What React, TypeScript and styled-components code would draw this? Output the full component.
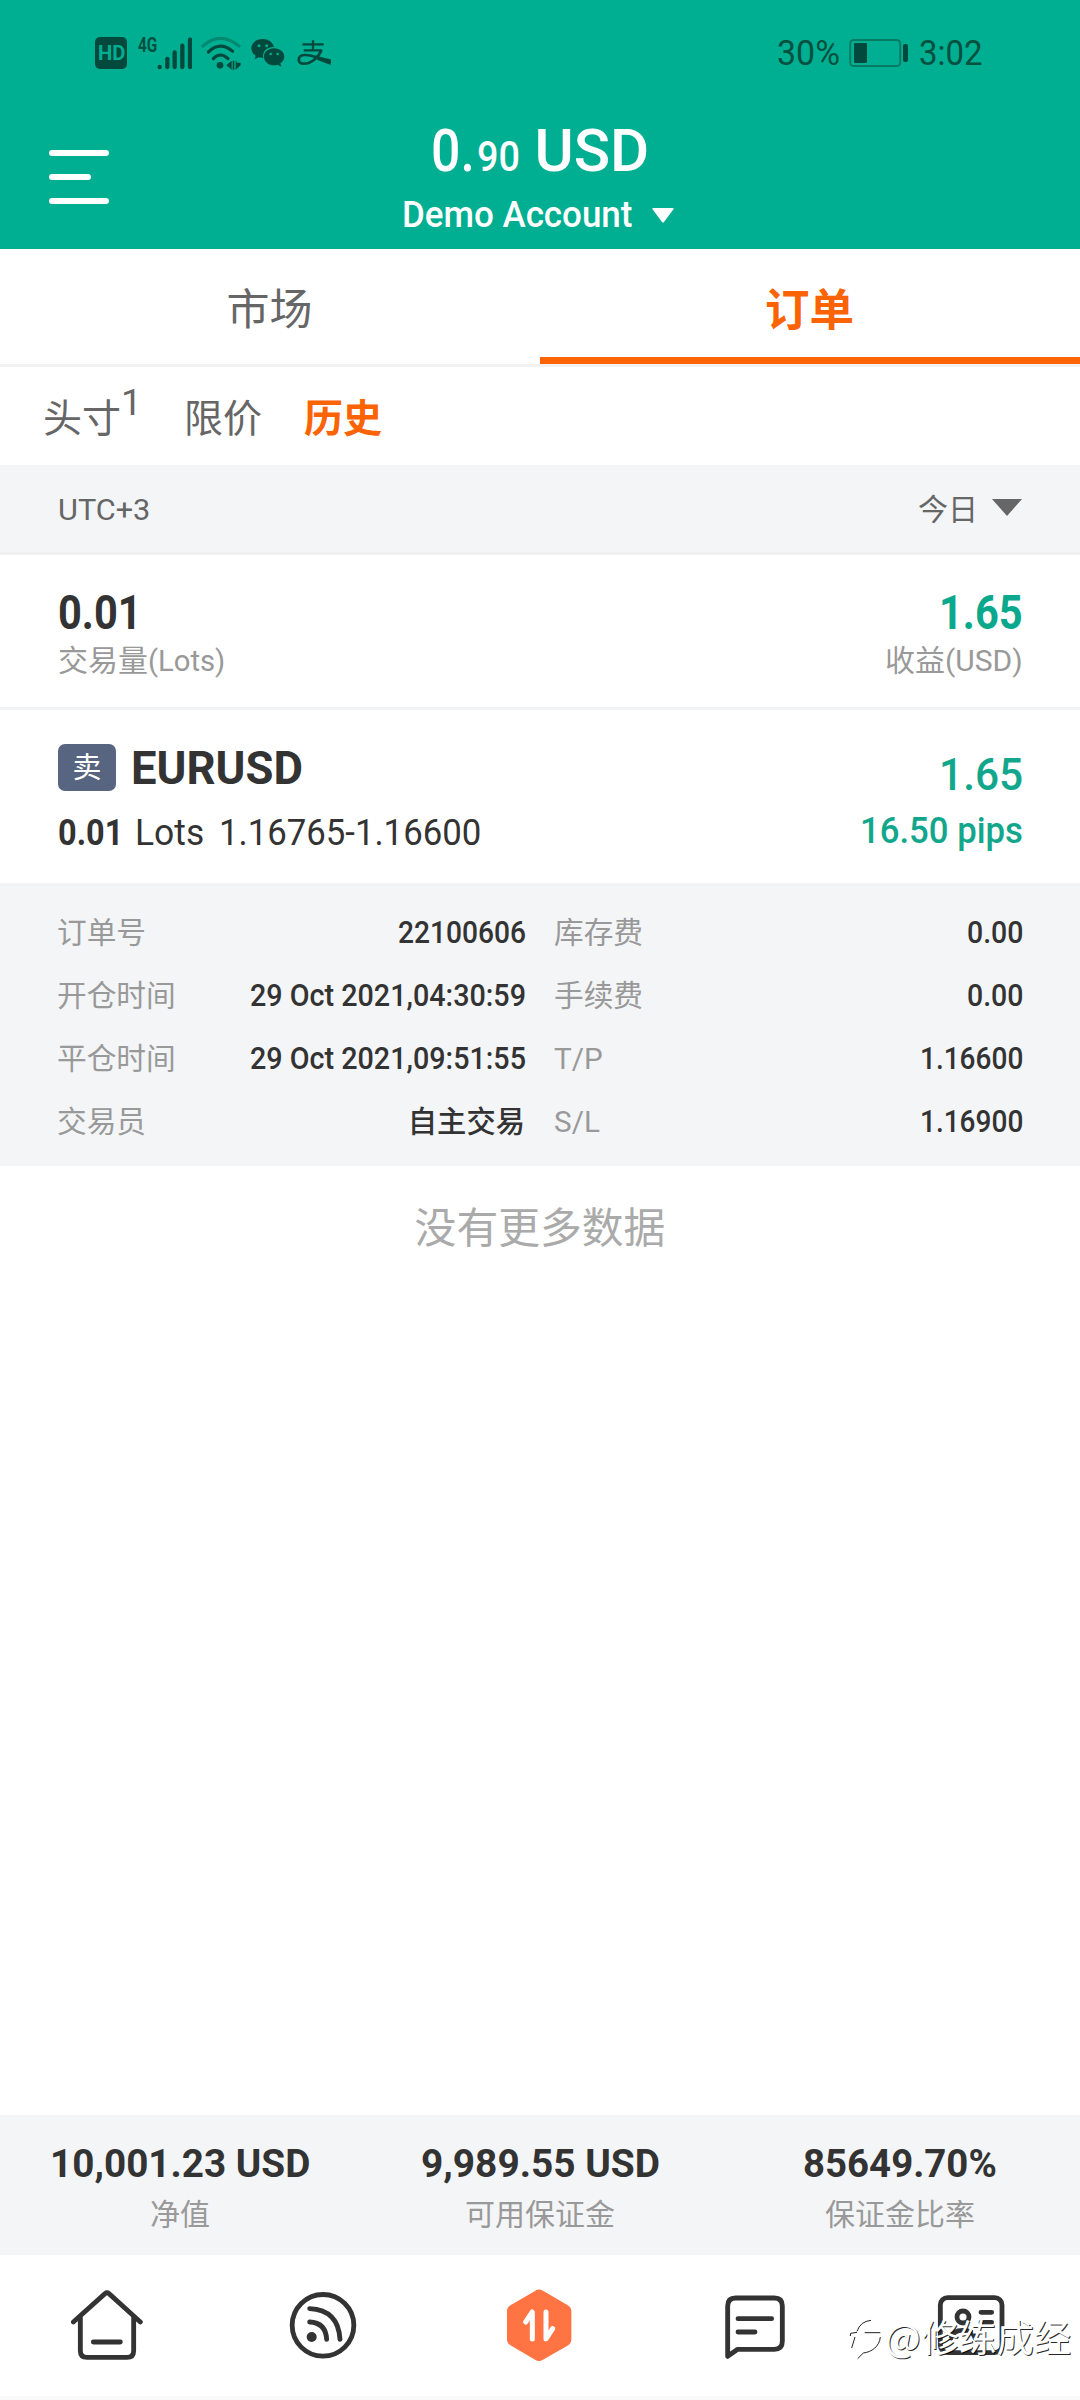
import React, { useLayoutEffect, useRef, useState } from 'react';
import styled, { createGlobalStyle } from 'styled-components';

const Global = createGlobalStyle`
  * { box-sizing: border-box; }
  body { margin: 0; background: #fff; }
`;

const teal = '#00ae92';
const orange = '#fb6304';
const ink = '#333333';

const Screen = styled.div`
  position: relative;
  width: 1080px;
  height: 2400px;
  display: flex;
  flex-direction: column;
  overflow: hidden;
  background: #fff;
  color: ${ink};
  font-family: Roboto, 'Noto Sans CJK SC', sans-serif;
`;

const FitBox = styled.span<{ $w: number }>`
  display: inline-block;
  flex: none;
  width: ${p => p.$w}px;
  white-space: nowrap;
`;
const FitInner = styled.span`
  display: inline-block;
  transform-origin: 0 50%;
`;

/** Condenses a run of text horizontally so that it fills the given width. */
function Fit({ w, children }: { w: number; children: React.ReactNode }) {
  const ref = useRef<HTMLSpanElement>(null);
  const [scale, setScale] = useState(1);
  useLayoutEffect(() => {
    if (ref.current) setScale(w / ref.current.offsetWidth);
  }, [w]);
  return (
    <FitBox $w={w}>
      <FitInner ref={ref} style={{ transform: `scaleX(${scale})` }}>{children}</FitInner>
    </FitBox>
  );
}

/* ---------- header ---------- */
const Header = styled.header`
  flex: none;
  height: 249px;
  background: ${teal};
  color: #fff;
`;
const StatusBar = styled.div`
  height: 106px;
  padding: 0 97px 0 95px;
  display: flex;
  align-items: center;
  justify-content: space-between;
  color: #06503f;
`;
const StatusSide = styled.div`
  display: flex;
  align-items: center;
`;
const HdBadge = styled.span`
  width: 32px;
  height: 32px;
  border-radius: 5px;
  background: #00493c;
  color: ${teal};
  font-size: 21px;
  font-weight: 700;
  line-height: 33px;
  padding-left: 3px;
`;
const NetType = styled.span`
  margin: -17px 0 0 11px;
  font-size: 21px;
  font-weight: 700;
  line-height: 24px;
`;
const StatusText = styled.span`
  padding-top: 2px;
  font-size: 35px;
  line-height: 40px;
  font-weight: 400;
`;
const Clock = styled(StatusText)`
  margin-left: 10px;
`;
const Glyph = styled.svg<{ $ml?: number }>`
  display: block;
  flex: none;
  margin-left: ${p => p.$ml ?? 0}px;
`;
const TitleBar = styled.div`
  display: grid;
  grid-template-columns: 140px 1fr 140px;
  height: 143px;
`;
const MenuButton = styled.div`
  padding: 44px 0 0 49px;
  display: flex;
  flex-direction: column;
  gap: 18px;
`;
const MenuLine = styled.span<{ $w: number }>`
  width: ${p => p.$w}px;
  height: 6px;
  border-radius: 3px;
  background: #fff;
`;
const Account = styled.div`
  padding-top: 9px;
  display: flex;
  flex-direction: column;
  align-items: center;
`;
const Balance = styled.div`
  display: flex;
  align-items: baseline;
  font-size: 60px;
  font-weight: 500;
  line-height: 72px;
`;
const Cents = styled.span`
  margin: 0 15px 0 2px;
  font-size: 43px;
  line-height: 60px;
`;
const AccountName = styled.div`
  margin: 5px 0 0 -5px;
  display: flex;
  align-items: center;
  gap: 20px;
  font-size: 36px;
  font-weight: 500;
  line-height: 46px;
`;

/* ---------- tabs ---------- */
const Tabs = styled.nav`
  flex: none;
  display: flex;
  height: 118px;
  border-bottom: 3px solid #f2f2f3;
`;
const Tab = styled.div<{ $active?: boolean }>`
  flex: 1;
  padding: 6px 1px 0 0;
  display: flex;
  align-items: center;
  justify-content: center;
  border-bottom: 7px solid ${p => (p.$active ? orange : 'transparent')};
  color: ${p => (p.$active ? orange : '#666')};
  font-size: ${p => (p.$active ? 44.5 : 43)}px;
  font-weight: ${p => (p.$active ? 700 : 400)};
`;
const SubTabs = styled.div`
  flex: none;
  height: 98px;
  padding: 5px 0 0 43px;
  display: flex;
  align-items: center;
`;
const SubTab = styled.span<{ $active?: boolean }>`
  margin-right: 42px;
  display: flex;
  font-size: 39px;
  line-height: 46px;
  color: ${p => (p.$active ? orange : '#666')};
  font-weight: ${p => (p.$active ? 700 : 400)};
`;
const Count = styled.span`
  width: 21px;
  margin-top: -16px;
  font-size: 37px;
`;

/* ---------- history ---------- */
const FilterBar = styled.div`
  flex: none;
  height: 90px;
  padding: 2px 58px 0 58px;
  display: flex;
  align-items: center;
  justify-content: space-between;
  background: #f4f5f7;
  border-bottom: 3px solid #f1f1f2;
  font-size: 30px;
  line-height: 40px;
  color: #666;
`;
const Range = styled.span`
  display: flex;
  align-items: center;
  gap: 14px;
`;
const Caret = styled(Glyph)`
  margin-top: -4px;
`;
const Totals = styled.section`
  flex: none;
  height: 155px;
  padding: 30px 57px 0 58px;
  display: flex;
  justify-content: space-between;
  border-bottom: 3px solid #f2f3f4;
`;
const Stack = styled.div<{ $end?: boolean }>`
  display: flex;
  flex-direction: column;
  align-items: ${p => (p.$end ? 'flex-end' : 'flex-start')};
`;
const TotalValue = styled.div<{ $gain?: boolean }>`
  font-size: 48px;
  font-weight: 700;
  line-height: 56px;
  color: ${p => (p.$gain ? '#0aa88c' : ink)};
`;
const TotalLabel = styled.div`
  font-size: 30px;
  line-height: 40px;
  color: #999;
`;
const Trade = styled.section`
  flex: none;
  height: 173px;
  padding: 34px 57px 0 58px;
  display: flex;
  justify-content: space-between;
`;
const SymbolRow = styled.div`
  display: flex;
  align-items: center;
  gap: 15px;
  height: 47px;
  font-size: 47px;
  font-weight: 700;
  line-height: 47px;
`;
const Side = styled.span`
  width: 58px;
  height: 47px;
  border-radius: 7px;
  background: #576580;
  color: #fff;
  font-size: 29px;
  font-weight: 400;
  line-height: 48px;
  text-align: center;
`;
const PriceRow = styled.div`
  margin-top: 20px;
  display: flex;
  font-size: 37px;
  line-height: 44px;
`;
const Lots = styled.span`
  margin: 0 15px 0 12px;
`;
const Profit = styled.div`
  margin-top: 6px;
  font-size: 45px;
  font-weight: 500;
  line-height: 50px;
  color: #12a78c;
`;
const Pips = styled.div`
  margin-top: 9px;
  font-size: 36px;
  font-weight: 500;
  line-height: 44px;
  color: #12a78c;
`;
const Details = styled.section`
  flex: none;
  height: 283px;
  padding: 15px 57px 0;
  display: grid;
  grid-template-columns: 469px 469px;
  grid-auto-rows: 63px;
  column-gap: 28px;
  border-top: 3px solid #f2f3f4;
  background: #f4f5f7;
`;
const Field = styled.div`
  display: flex;
  align-items: center;
  justify-content: space-between;
  font-size: 31px;
  font-weight: 500;
  line-height: 40px;
`;
const FieldName = styled.span`
  font-size: 29.7px;
  font-weight: 400;
  color: #999;
`;
const Trader = styled.span`
  margin-right: 1px;
  font-size: 29.3px;
`;
const Empty = styled.div`
  flex: 1;
  padding-top: 33px;
  text-align: center;
  font-size: 41.8px;
  line-height: 60px;
  color: #aaa;
`;

/* ---------- footer ---------- */
const Funds = styled.section`
  flex: none;
  height: 140px;
  padding-top: 27px;
  display: grid;
  grid-template-columns: repeat(3, 360px);
  background: #f4f5f7;
  text-align: center;
`;
const FundValue = styled.div`
  font-size: 39px;
  font-weight: 700;
  line-height: 44px;
`;
const FundLabel = styled.div`
  margin-top: 9px;
  font-size: 30px;
  line-height: 40px;
  color: #999;
`;
const NavBar = styled.nav`
  flex: none;
  height: 145px;
  padding-bottom: 2px;
  display: grid;
  grid-template-columns: repeat(5, 216px);
  align-items: center;
  justify-items: center;
  border-bottom: 4px solid #fafafa;
`;
const NavIcon = styled.svg`
  width: 72px;
  height: 72px;
  margin-left: -2px;
  fill: none;
  stroke: #333;
  stroke-width: 14.5;
  stroke-linecap: round;
  stroke-linejoin: round;
`;
const Watermark = styled.div`
  position: absolute;
  right: 9px;
  bottom: 31px;
  display: flex;
  align-items: center;
  color: #fff;
  font-family: 'Noto Sans CJK SC', sans-serif;
  font-size: 37.3px;
  line-height: 54px;
  padding-bottom: 6px;
  text-shadow: 1px 1px 0 rgba(0, 0, 0, 0.85);
`;
const At = styled.span`
  margin: 0 1px 0 1px;
  font-size: 38px;
`;
const WatermarkLogo = styled(Glyph)`
  margin-top: 5px;
`;

const fields: [string, React.ReactNode, string, React.ReactNode][] = [
  ['订单号', <Fit w={128}>22100606</Fit>, '库存费', <Fit w={56}>0.00</Fit>],
  ['开仓时间', <Fit w={276}>29 Oct 2021,04:30:59</Fit>, '手续费', <Fit w={56}>0.00</Fit>],
  ['平仓时间', <Fit w={276}>29 Oct 2021,09:51:55</Fit>, 'T/P', <Fit w={103}>1.16600</Fit>],
  ['交易员', <Trader>自主交易</Trader>, 'S/L', <Fit w={103}>1.16900</Fit>],
];

export default function App() {
  return (
    <Screen>
      <Global />
      <Header>
        <StatusBar>
          <StatusSide>
            <HdBadge><Fit w={27}>HD</Fit></HdBadge>
            <NetType><Fit w={19}>4G</Fit></NetType>
            <Glyph width="35" height="34" viewBox="0 0 105 102" $ml={0} stroke="#00493c" strokeWidth="13" strokeLinecap="round">
              <path d="M8 93V93.1M31 69V93M53 49V93M76 29V93M99 11V93" />
            </Glyph>
            <Glyph width="40" height="34" viewBox="0 0 120 102" $ml={9} fill="none" stroke="#00493c" strokeWidth="9.500" strokeLinecap="round">
              <path d="M6 30Q57-16 114 30" stroke="#008a72" />
              <path d="M22 48Q58 14 95 46M37 68Q58 46 81 68" />
              <circle cx="57" cy="88" r="10" fill="#00493c" stroke="none" />
              <path d="M92 74V101L76 88ZM95 74H100V101H95ZM104 74V101L119 88V80L107 80V74Z" fill="#00493c" stroke="none" />
            </Glyph>
            <Glyph width="34" height="30" viewBox="0 0 102 90" $ml={10} fill="#00493c">
              <path d="M35 3C16 3 1 15 1 31c0 9 5 17 13 22l-3 11 12-6c4 1 8 2 14 2C33 41 47 26 69 27 66 13 52 3 35 3Z" />
              <path d="M69 31c-17 0-30 11-30 25s13 26 30 26c4 0 8-1 11-2l11 6-3-10c7-5 12-12 12-20C100 42 86 31 69 31Z" />
              <g fill={teal}><circle cx="24" cy="23" r="4.5" /><circle cx="47" cy="23" r="4.5" /><circle cx="59" cy="48" r="3.8" /><circle cx="80" cy="48" r="3.8" /></g>
            </Glyph>
            <Glyph width="34" height="28" viewBox="0 0 102 84" $ml={12} fill="none" stroke="#00493c" strokeWidth="8">
              <path d="M16 16H80M48 4V32M20 34H76" strokeWidth="7" />
              <path d="M73 33C66 54 43 74 20 74C0 74 0 50 22 48C45 46 67 60 101 68" />
              <path d="M66 53L101 61V78L60 62Z" fill="#00493c" stroke="none" />
            </Glyph>
          </StatusSide>
          <StatusSide>
            <StatusText><Fit w={63}>30%</Fit></StatusText>
            <Glyph width="60" height="28" viewBox="0 0 60 28" $ml={9}>
              <rect x="1.2" y="1" width="50" height="26" rx="3.5" fill="none" stroke="#067a63" strokeWidth="1.9" />
              <rect x="5" y="4" width="13" height="20" rx="1" fill="#00493c" />
              <rect x="54" y="5" width="5" height="18" rx="2" fill="#00493c" />
            </Glyph>
            <Clock><Fit w={64}>3:02</Fit></Clock>
          </StatusSide>
        </StatusBar>
        <TitleBar>
          <MenuButton>
            <MenuLine $w={60} />
            <MenuLine $w={42} />
            <MenuLine $w={60} />
          </MenuButton>
          <Account>
            <Balance>
              <Fit w={44}>0.</Fit>
              <Cents><Fit w={43}>90</Fit></Cents>
              <Fit w={115}>USD</Fit>
            </Balance>
            <AccountName>
              <Fit w={230}>Demo Account</Fit>
              <Glyph width="22" height="15" viewBox="0 0 22 15" fill="#fff">
                <path d="M1.5 0H20.500Q22.500 0 21.300 1.600L12 14Q11 15.200 10 14L.7 1.600Q-.5 0 1.500 0Z" />
              </Glyph>
            </AccountName>
          </Account>
        </TitleBar>
      </Header>

      <Tabs>
        <Tab>市场</Tab>
        <Tab $active>订单</Tab>
      </Tabs>
      <SubTabs>
        <SubTab>头寸<Count>1</Count></SubTab>
        <SubTab>限价</SubTab>
        <SubTab $active>历史</SubTab>
      </SubTabs>

      <FilterBar>
        <Fit w={92}>UTC+3</Fit>
        <Range>
          今日
          <Caret width="30" height="17" viewBox="0 0 30 17" fill="#666"><path d="M0 0H30L15 17Z" /></Caret>
        </Range>
      </FilterBar>

      <Totals>
        <Stack>
          <TotalValue><Fit w={84}>0.01</Fit></TotalValue>
          <TotalLabel>交易量<Fit w={77}>(Lots)</Fit></TotalLabel>
        </Stack>
        <Stack $end>
          <TotalValue $gain><Fit w={84}>1.65</Fit></TotalValue>
          <TotalLabel>收益<Fit w={78}>(USD)</Fit></TotalLabel>
        </Stack>
      </Totals>

      <Trade>
        <Stack>
          <SymbolRow>
            <Side>卖</Side>
            <Fit w={172}>EURUSD</Fit>
          </SymbolRow>
          <PriceRow>
            <b><Fit w={65}>0.01</Fit></b>
            <Lots><Fit w={69}>Lots</Fit></Lots>
            <Fit w={262}>1.16765-1.16600</Fit>
          </PriceRow>
        </Stack>
        <Stack $end>
          <Profit><Fit w={84}>1.65</Fit></Profit>
          <Pips><Fit w={163}>16.50 pips</Fit></Pips>
        </Stack>
      </Trade>

      <Details>
        {fields.map(([a, av, b, bv]) => (
          <React.Fragment key={a}>
            <Field><FieldName>{a}</FieldName>{av}</Field>
            <Field><FieldName>{b}</FieldName>{bv}</Field>
          </React.Fragment>
        ))}
      </Details>

      <Empty>没有更多数据</Empty>

      <Funds>
        <div><FundValue><Fit w={260}>10,001.23 USD</Fit></FundValue><FundLabel>净值</FundLabel></div>
        <div><FundValue><Fit w={239}>9,989.55 USD</Fit></FundValue><FundLabel>可用保证金</FundLabel></div>
        <div><FundValue><Fit w={194}>85649.70%</Fit></FundValue><FundLabel>保证金比率</FundLabel></div>
      </Funds>

      <NavBar>
        <NavIcon viewBox="95 57 216 216">
          <path d="M102 156L197 71Q203 66 209 71L303 156M123 140V242Q123 262 143 262H263Q283 262 283 242V140M162 216H243" />
        </NavIcon>
        <NavIcon viewBox="742 57 216 216">
          <circle cx="850" cy="166" r="92.500" />
          <path d="M810 116Q896 120 901 208M810 156Q858 158 861 208" />
          <circle cx="816" cy="201" r="15" fill="#333" stroke="none" />
        </NavIcon>
        <NavIcon viewBox="70 57 216 216">
          <path d="M178 80L254 124V208L178 252L103 208V124Z" fill="#ff7442" stroke="#ff7442" strokeWidth="42" />
          <path d="M138 156L158 126V207M199 126V207L219 176" stroke="#fff" strokeWidth="15" />
        </NavIcon>
        <NavIcon viewBox="719 57 216 216">
          <path d="M745 259V108Q745 84 769 84H885Q909 84 909 108V214Q909 238 885 238H775ZM776 146H877M776 186H827" />
        </NavIcon>
        <NavIcon viewBox="346 57 216 216">
          <rect x="362" y="83" width="185" height="165" rx="22" />
          <circle cx="430" cy="141" r="18" />
          <path d="M484 127H516M484 157H516M394 204Q399 181 430 181Q460 181 466 204" />
        </NavIcon>
      </NavBar>

      <Watermark>
        <WatermarkLogo width="36" height="46" viewBox="15 30 108 138" fill="none">
          <path d="M38 80Q52 42 82 40Q104 42 109 64M109 90C106 118 84 132 58 137L42 153M22 78H40L28 118M64 76H110" stroke="#fff" strokeWidth="6" />
          <path d="M42 76Q52 46 84 43M112 93C109 122 86 138 61 141L44 158M22 90L23 82L42 79M36 93L26 126M65 80H112" stroke="#222" strokeWidth="3" />
        </WatermarkLogo>
        <At>@</At>
        修练成经
      </Watermark>
    </Screen>
  );
}
